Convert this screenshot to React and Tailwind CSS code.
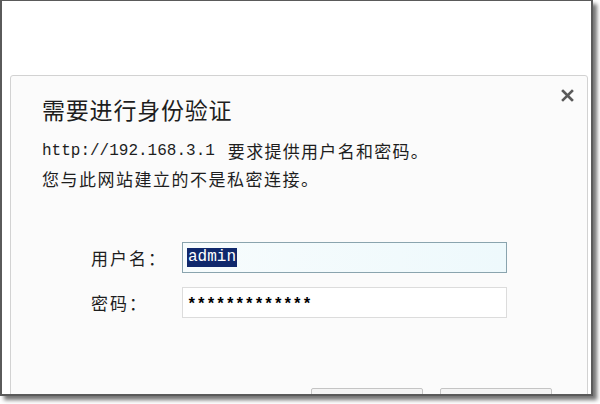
export default function App() {
  const cjk = { fontFamily: '"Noto Sans CJK SC", "Noto Sans", sans-serif' };
  return (
    <div className="w-[600px] h-[404px] bg-white overflow-hidden">
      <div className="w-[593px] h-[396px] bg-white border-l-2 border-t border-r-2 border-b-2 border-[#5a5a5a] shadow-[4px_4px_4px_rgba(0,0,0,0.55)] overflow-hidden pt-[74px] pl-[8px]">
        <div className="relative w-[578px] h-[340px] bg-[#fbfbfb] border border-[#d2d2d2] rounded-t-[3px] pt-[19px] pl-[31px] text-[#1e1e1e]" style={cjk}>
          <div className="absolute top-[12px] right-[12px] w-[15px] h-[15px]">
            <svg viewBox="0 0 15 15" className="w-[15px] h-[15px]">
              <path d="M3 3 L12 12 M12 3 L3 12" stroke="#5a5a5a" strokeWidth="2.6" strokeLinecap="square" />
            </svg>
          </div>
          <div className="h-[28px] leading-[28px] text-[23px] tracking-[0.8px]">需要进行身份验证</div>
          <div className="mt-[14px] h-[28px] leading-[28px] flex items-center whitespace-nowrap">
            <span className="text-[16px]" style={{ fontFamily: '"Liberation Mono", monospace' }}>http://192.168.3.1</span>
            <span className="ml-[13px] text-[17px] tracking-[1.3px]">要求提供用户名和密码。</span>
          </div>
          <div className="h-[28px] leading-[28px] text-[17px] tracking-[1.5px] whitespace-nowrap">您与此网站建立的不是私密连接。</div>
          <div className="mt-[49px] ml-[49px] flex flex-col gap-[14px]">
            <div className="flex items-center h-[31px]">
              <div className="w-[91px] text-[17px] tracking-[2px]">用户名：</div>
              <div className="w-[325px] h-[31px] border border-[#8aa4ae] bg-gradient-to-r from-[#f7fcfd] to-[#eef9fc] flex items-center pl-[4px]">
                <span className="bg-[#10286c] text-white text-[16px] leading-[19px] px-[1px]" style={{ fontFamily: '"Liberation Mono", monospace' }}>admin</span>
              </div>
            </div>
            <div className="flex items-center h-[31px]">
              <div className="w-[91px] text-[17px] tracking-[2px]">密码：</div>
              <div className="w-[325px] h-[31px] border border-[#dcdcdc] bg-white flex items-center pl-[4px]">
                <span className="text-[16px] leading-[19px] pt-[6px] text-black font-bold" style={{ fontFamily: '"Liberation Mono", monospace' }}>*************</span>
              </div>
            </div>
          </div>
          <div className="mt-[70px] flex justify-end gap-[17px] pr-[35px]">
            <div className="w-[112px] h-[30px] border border-[#c4c4c4] rounded-[2px] bg-[#f4f4f4]"></div>
            <div className="w-[112px] h-[30px] border border-[#c4c4c4] rounded-[2px] bg-[#f4f4f4]"></div>
          </div>
        </div>
      </div>
    </div>
  );
}
